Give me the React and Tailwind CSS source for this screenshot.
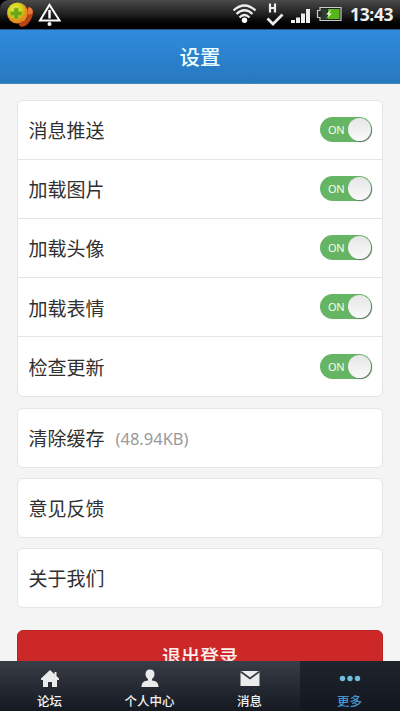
import React from "react";

const toggles = ["消息推送", "加载图片", "加载头像", "加载表情", "检查更新"];

function Toggle() {
  return (
    <div className="mb-[2px] flex h-[25px] w-[52px] items-center justify-between rounded-full bg-[#66b564] pl-[8px]">
      <span className="font-['Noto_Sans',sans-serif] text-[11px] leading-none tracking-[-0.300px] text-[#f2fff0]">ON</span>
      <span className="mr-px h-[23px] w-[23px] rounded-full bg-gradient-to-b from-[#e6e6e6] to-[#fafafa] shadow-[1px_1px_1px_#68786a]" />
    </div>
  );
}

function StatusBar() {
  return (
    <header className="flex h-[29px] shrink-0 items-start justify-between bg-gradient-to-b from-[#4a4a4a] via-[#202020] to-black">
      <svg width="70" height="29" viewBox="0 0 70 29">
        <defs>
          <radialGradient id="ball" cx="40%" cy="35%">
            <stop offset="0" stopColor="#f4ee4a" />
            <stop offset="0.65" stopColor="#cfd21c" />
            <stop offset="1" stopColor="#e98a1c" />
          </radialGradient>
        </defs>
        <path d="M0 0H8Q1 1 0 8Z" fill="#000" />
        <circle cx="17.500" cy="13" r="10.500" fill="url(#ball)" />
        <path d="M14 8h4.500v3.500H22v4h-3.500V19H14v-3.500h-3.500v-4H14Z" fill="#6ca51a" stroke="#a6c520" strokeWidth="0.800" />
        <path d="M29 7c4 1 5 5 3 10s-6 11-11.500 9.500L18.500 24l3-2.500c4 .5 6.500-3.500 6.500-8l-1-3Z" fill="#b84416" />
        <path d="M28.500 7c4 1 5 4 3.500 7l-3.500.5-1-3Z" fill="#e97a38" />
        <path d="M49.500 4.800L40 20.500h19.500Z" fill="none" stroke="#fff" strokeWidth="2" />
        <path d="M49.500 10v8.500" stroke="#fff" strokeWidth="2.400" />
        <circle cx="49.500" cy="24" r="2" fill="#fff" />
      </svg>
      <div className="flex">
        <svg width="118" height="29" viewBox="228 0 118 29">
          <g fill="none" stroke="#ececec">
            <path d="M233.500 10.500Q244.500 0.500 255.500 10.500" strokeWidth="2.200" />
            <path d="M236.500 14Q244.500 6.500 252.500 14" strokeWidth="2.200" />
            <path d="M239.500 17.500Q244.500 12.500 249.500 17.500" strokeWidth="2.200" />
            <path d="M270 3.500v9M275 3.500v9M270 8h5" strokeWidth="2.200" />
            <path d="M267.500 18.500l5.500 5.500 9.500-9.500" strokeWidth="2.800" />
          </g>
          <circle cx="244.500" cy="20.300" r="2.700" fill="#fff" />
          <path fill="#eee" d="M291 20h4v3h-4zM296 17.500h4V23h-4zM301 13.500h4V23h-4zM306 9h4v14h-4z" />
          <path d="M320 7.500h21v13h-21v-3h-2.500v-7h2.500Z" fill="#202820" stroke="#c8ccc8" strokeWidth="1.200" />
          <path d="M328 9h11.500v10H328z" fill="#57b61c" />
          <path d="M321.500 9h6v10h-6z" fill="#303a30" />
          <path d="M331.500 9l-5.500 5.500h3L326 19l6-5.500h-3Z" fill="#f1ffe4" />
        </svg>
        <span className="w-[54px] pl-[4px] pt-[5px] font-['Open_Sans',sans-serif] text-[17.500px] font-bold leading-[19px] tracking-[-0.350px] text-[#f0f0f0]">13:43</span>
      </div>
    </header>
  );
}

function Card({ children, className = "" }) {
  return (
    <section className={`flex h-[60px] shrink-0 items-center rounded-md border border-[#e5e5e5] bg-white px-[10.500px] pt-px text-[19px] ${className}`}>
      {children}
    </section>
  );
}

function Tab({ label, children, active }) {
  return (
    <div className={`flex flex-1 flex-col items-center pt-[7px] ${active ? "bg-gradient-to-b from-[#20242c] to-[#12161e] text-[#4796cf]" : "text-[#f2f2f2]"}`}>
      <svg className="mr-px" width="22" height="22" viewBox="0 0 22 22" fill="#e9ecea">{children}</svg>
      <span className="mr-px mt-[2px] text-[12.500px] font-medium leading-[18px]">{label}</span>
    </div>
  );
}

export default function App() {
  return (
    <div className="flex h-[711px] w-[400px] flex-col overflow-hidden bg-[#f4f4f4] font-['Noto_Sans_CJK_SC',sans-serif] text-[#303030]">
      <StatusBar />
      <div className="flex h-[55px] shrink-0 items-center justify-center border-y border-t-[#285680] border-b-[#4388bd] bg-gradient-to-b from-[#308bdd] to-[#2778bf] pb-px text-[20.500px] font-medium text-[#edffff]">设置</div>
      <main className="flex min-h-0 flex-1 flex-col overflow-hidden px-[17px] pt-[16px]">
        <section className="h-[297px] shrink-0 divide-y divide-[#e5e5e5] rounded-md border border-[#e5e5e5] bg-white">
          {toggles.map((label) => (
            <div key={label} className="flex h-[59.100px] items-center justify-between pl-[10.500px] pr-[10px] pt-px text-[19px]">
              <span>{label}</span>
              <Toggle />
            </div>
          ))}
        </section>
        <Card className="mt-[11px]">
          清除缓存
          <span className="ml-[11px] pt-px font-['Noto_Sans',sans-serif] text-[16.500px] text-[#999]">(48.94KB)</span>
        </Card>
        <Card className="mt-[10px]">意见反馈</Card>
        <Card className="mt-[10px]">关于我们</Card>
        <button className="mt-[22px] h-[59px] shrink-0 rounded-md border border-[#bd2424] bg-[#cd2828] pb-[6px] text-[19px] font-medium text-[#fff0f0]">退出登录</button>
      </main>
      <nav className="flex h-[50px] shrink-0 bg-gradient-to-b from-[#393d45] to-[#151922]">
        <Tab label="论坛">
          <path d="M11 2L2 10.500V12h2v7h5v-5h4v5h5v-7h2v-1.500l-2.500-2.400V4h-2v2.200Z" />
        </Tab>
        <Tab label="个人中心">
          <path d="M11 1.500c-3 0-4.500 2-4.500 4.500 0 2 1 4 2.500 5v1.500c-4 .5-6.500 2-6.500 6.500h17c0-4.500-2.500-6-6.500-6.500V11c1.500-1 2.500-3 2.500-5 0-2.500-1.500-4.500-4.500-4.500Z" />
        </Tab>
        <Tab label="消息">
          <path d="M1.500 3h19v15h-19z" />
          <path d="M1.500 3.500L11 10.500l9.500-7" fill="none" stroke="#343a40" strokeWidth="1.700" />
        </Tab>
        <Tab label="更多" active>
          <g fill="#70bde0">
            <circle cx="3.500" cy="10.500" r="2.700" />
            <circle cx="11" cy="10.500" r="2.700" />
            <circle cx="18.500" cy="10.500" r="2.700" />
          </g>
        </Tab>
      </nav>
    </div>
  );
}
